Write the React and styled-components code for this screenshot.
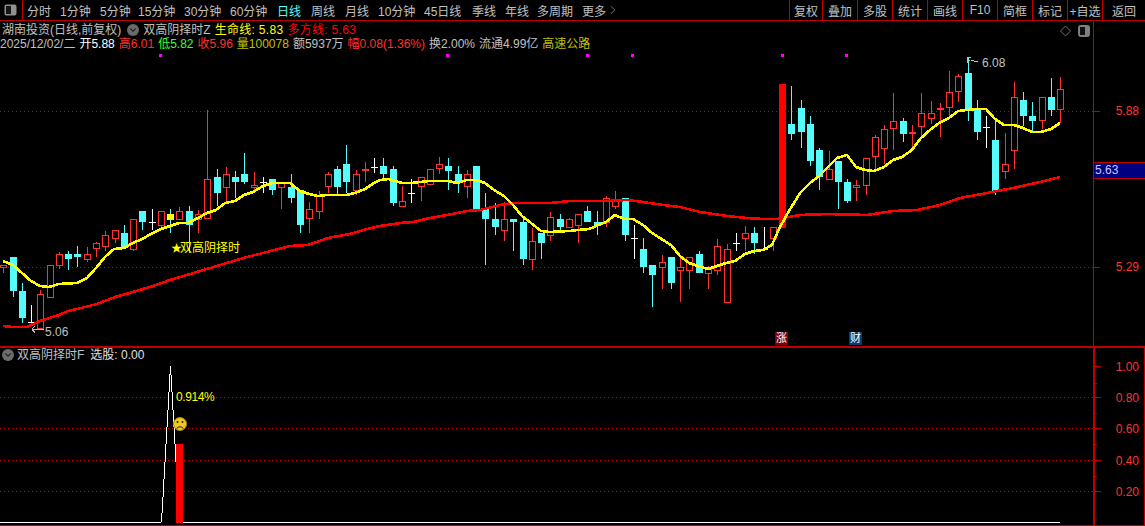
import React from "react";
import styled, { createGlobalStyle } from "styled-components";
import { ChevronDown, ChevronRight } from "lucide-react";

const UP = "#ff3232";
const CYAN = "#54fcfc";
const GREY = "#c0c0c0";
const OLIVE = "#c0c000";
const LINE = "#c00000";

const GlobalStyle = createGlobalStyle`
  html, body {
    margin: 0;
    background: #000;
  }
  body {
    font-family: "Liberation Sans", "Noto Sans CJK SC", sans-serif;
    font-size: 12px;
    color: ${GREY};
  }
`;

const Page = styled.div`
  width: 1145px;
  height: 526px;
  overflow: hidden;
  display: flex;
  flex-direction: column;
  background: #000;
`;

const Toolbar = styled.div`
  height: 20px;
  flex: none;
  display: flex;
  align-items: center;
  border-bottom: 1px solid ${LINE};
`;

const PanelToggle = styled.div`
  width: 23px;
  height: 20px;
  flex: none;
  display: flex;
  align-items: center;
  box-sizing: border-box;
  padding-left: 4px;
  border-right: 1px solid ${LINE};
`;

const Periods = styled.div`
  display: flex;
  align-items: center;
  flex: 1;
  padding-left: 4px;
`;

const Period = styled.span`
  width: ${(p) => (p.$w ? `${p.$w}px` : "auto")};
  flex: none;
  color: ${(p) => (p.$active ? CYAN : GREY)};
  white-space: nowrap;
  display: flex;
  align-items: center;
`;

const ToolGroup = styled.div`
  display: flex;
  height: 20px;
`;

const ToolButton = styled.div`
  width: ${(p) => p.$w || 35}px;
  box-sizing: border-box;
  border-left: 1px solid ${LINE};
  display: flex;
  align-items: center;
  justify-content: center;
  white-space: nowrap;
`;

const Body = styled.div`
  flex: 1;
  display: flex;
  flex-direction: column;
  min-height: 0;
`;

const Pane = styled.div`
  display: flex;
  height: ${(p) => p.$h}px;
  flex: none;
`;

const SubPane = styled(Pane)`
  border-top: 2px solid ${LINE};
  border-bottom: 1px solid ${LINE};
`;

const ChartArea = styled.div`
  position: relative;
  width: 1093px;
  flex: none;
`;

const Drawing = styled.svg`
  display: block;
  position: absolute;
  left: 0;
  top: 0;
`;

const Axis = styled.div`
  position: relative;
  flex: 1;
  border-left: ${(p) => (p.$heavy ? 2 : 1)}px solid ${LINE};
  border-right: ${(p) => (p.$heavy ? 1 : 0)}px solid ${LINE};
`;

const AxisLabel = styled.span`
  position: absolute;
  right: ${(p) => (p.$heavy ? 5 : 6)}px;
  top: ${(p) => p.$top}px;
  color: ${UP};
  line-height: 14px;
`;

const AxisTick = styled.i`
  position: absolute;
  left: 0;
  top: ${(p) => p.$top}px;
  width: ${(p) => p.$w}px;
  height: 1px;
  background: ${LINE};
`;

const PriceTag = styled.div`
  position: absolute;
  left: 0;
  right: 0;
  top: ${(p) => p.$top}px;
  height: 15px;
  border-top: 1px solid ${LINE};
  border-bottom: 1px solid ${LINE};
  background: #000080;
  color: #c8c8ff;
  line-height: 15px;
  padding-left: 1px;
`;

const Legend = styled.div`
  position: absolute;
  left: ${(p) => p.$x || 0}px;
  top: ${(p) => p.$y}px;
  display: flex;
  align-items: center;
  gap: ${(p) => p.$gap || 0}px;
  white-space: nowrap;
  line-height: 14px;
`;

const Txt = styled.span`
  color: ${(p) => p.$c || GREY};
  letter-spacing: ${(p) => p.$ls || 0}px;
  margin-left: ${(p) => p.$ml || 0}px;
`;

const RoundButton = styled.span`
  width: 12px;
  height: 12px;
  margin-left: ${(p) => p.$ml || 0}px;
  border-radius: 50%;
  background: #6a6a6a;
  display: inline-flex;
  align-items: center;
  justify-content: center;
  color: #101010;
`;

const Note = styled.span`
  position: absolute;
  left: ${(p) => p.$x}px;
  top: ${(p) => p.$y}px;
  color: ${(p) => p.$c || GREY};
  line-height: 14px;
  white-space: nowrap;
  letter-spacing: ${(p) => p.$ls || 0}px;
`;

const Star = styled.span`
  font-size: 11px;
  margin-right: -2px;
`;

const Badge = styled.span`
  position: absolute;
  left: ${(p) => p.$x}px;
  top: 311px;
  width: 13px;
  height: 13px;
  background: ${(p) => p.$bg};
  color: #fff;
  font-size: 11px;
  line-height: 13px;
  text-align: center;
`;

const periods = [
  ["分时", 33], ["1分钟", 40], ["5分钟", 38], ["15分钟", 46], ["30分钟", 46], ["60分钟", 47], ["日线", 34],
  ["周线", 34], ["月线", 33], ["10分钟", 46], ["45日线", 48], ["季线", 33], ["年线", 32], ["多周期", 45],
];
const tools = [["复权", 33], ["叠加"], ["多股"], ["统计"], ["画线"], ["F10"], ["简框"], ["标记"], ["+自选"], ["返回", 43]];

// type, wick top, body top, body bottom, wick bottom (screen y)
const candles = [
  ["r",265,265,268,273],["c",257,257,291,297],["c",283,291,318,323],["w",305,322,322,325],["r",290,294,329,329],
  ["r",265,265,298,298],["r",252,254,266,269],["c",251,254,259,270],["c",246,254,257,267],["r",247,254,260,262],
  ["r",242,243,249,257],["r",231,235,247,251],["r",230,230,239,243],["c",225,233,248,248],["r",219,219,250,251],
  ["c",211,211,222,230],["w",209,222,222,230],["r",211,211,226,227],["y",209,214,220,233],["r",207,211,220,220],
  ["c",206,211,225,253],["r",210,214,220,233],["r",110,179,219,219],["c",169,177,193,206],["r",167,174,188,202],
  ["c",171,177,182,198],["c",153,174,182,184],["r",172,185,188,190],["w",177,182,182,193],["c",179,179,190,195],
  ["r",182,182,188,209],["c",174,187,198,203],["c",190,190,225,233],["r",202,209,219,233],["r",191,196,212,219],
  ["r",172,174,187,193],["c",166,169,187,195],["c",145,164,182,193],["r",170,174,191,195],["r",162,169,171,182],
  ["w",158,167,167,173],["c",158,166,174,179],["c",166,169,203,206],["r",186,201,207,207],["w",179,193,193,203],
  ["r",177,177,187,201],["r",169,169,185,185],["r",157,164,169,174],["c",158,166,171,190],["c",166,174,183,193],
  ["r",170,174,187,198],["c",166,166,209,209],["c",193,209,219,265],["c",203,219,227,235],["r",202,219,231,241],
  ["c",219,219,222,251],["c",219,222,259,265],["r",228,241,260,270],["c",233,233,243,259],["r",212,217,236,241],
  ["c",214,219,227,232],["r",218,219,228,228],["r",214,214,226,243],["c",206,211,222,222],["c",211,222,225,235],
  ["r",196,198,223,227],["r",191,201,207,209],["c",198,198,235,241],["w",225,238,238,259],["c",238,249,267,273],
  ["c",265,265,275,307],["r",255,262,268,289],["c",257,257,283,289],["r",256,267,271,302],["r",257,257,271,289],
  ["c",251,254,273,273],["r",266,268,274,289],["r",239,246,271,275],["r",244,249,303,303],["w",233,243,243,251],
  ["r",226,233,239,251],["c",227,233,243,254],["w",227,249,249,250],["r",227,227,239,251],["R",84,84,228,228],
  ["c",86,124,134,140],["c",100,108,132,148],["c",116,124,161,166],["c",148,150,177,190],["r",151,169,180,180],
  ["c",161,161,182,209],["c",179,182,201,203],["r",180,185,188,201],["r",158,158,186,195],["r",135,137,157,170],
  ["r",125,129,149,164],["r",93,121,129,150],["c",118,121,134,142],["r",125,132,134,150],["r",93,113,127,138],
  ["r",101,113,119,124],["r",103,108,110,137],["r",71,92,108,117],["r",74,76,92,102],["c",57,73,110,121],
  ["c",100,110,132,140],["w",116,127,127,148],["c",120,140,191,195],["r",133,164,172,179],["r",82,97,151,169],
  ["c",92,100,116,126],["c",102,116,121,132],["r",97,97,121,129],["c",78,97,110,116],["r",77,89,110,123],
];

const yellowLine = "3,261 13,265 22,273 31,281 40,286 49,287 59,284 77,283 87,278 96,268 105,257 114,249 124,248 133,243 142,239 151,234 161,229 179,223 188,223 198,218 207,213 216,210 225,203 235,201 244,195 253,192 263,186 272,183 290,183 300,191 309,194 318,196 327,195 346,195 355,193 365,189 374,183 380,180 389,179 402,183 411,183 429,181 448,181 457,183 467,180 476,180 485,183 494,190 504,196 513,205 522,216 531,223 541,231 550,232 569,231 578,230 589,229 606,222 615,215 624,219 633,219 643,225 652,233 671,245 680,256 689,263 698,266 708,269 717,266 726,263 735,261 745,254 754,251 763,250 772,245 779,229 786,216 800,193 810,183 819,176 828,167 837,158 847,155 856,167 865,170 874,171 884,167 893,160 902,157 912,150 921,138 930,130 939,123 949,118 958,111 967,110 976,109 986,109 995,119 1004,125 1014,125 1023,128 1032,132 1041,132 1051,129 1060,123";
const redLine = "3,326 13,327 27,327 40,321 59,315 68,311 77,309 97,304 115,297 133,292 153,286 170,280 187,275 207,269 227,263 247,257 267,252 290,246 308,245 328,238 350,234 367,229 380,226 400,223 413,222 430,218 447,215 467,211 480,210 500,205 513,203 550,203 570,201 607,201 627,200 643,202 663,205 680,207 700,212 727,216 747,218 763,219 777,219 800,215 827,214 867,215 893,211 917,210 940,205 960,198 987,193 1013,188 1040,182 1060,177";
const peak = "0,522 161,522 162,513 163,497 164,479 165,462 166,444 167,427 168,410 169,392 170,374 170,366 171,375 172,392 173,410 174,427 175,444 175,462";

const candleX = (i) => Math.round(3.3 + i * 9.272);

const Candle = ({ data, i }) => {
  const [type, wickTop, top, bottom, wickBottom] = data;
  const x = candleX(i);
  if (type === "w") {
    return (
      <g stroke="#fff" shapeRendering="crispEdges">
        <line x1={x + 0.5} x2={x + 0.5} y1={wickTop} y2={wickBottom} />
        <line x1={x - 3} x2={x + 4} y1={top + 0.5} y2={top + 0.5} />
      </g>
    );
  }
  if (type === "R") {
    return <rect x={x - 3} y={top} width={7} height={bottom - top} fill="#ff0000" shapeRendering="crispEdges" />;
  }
  const hollow = type === "r";
  const color = hollow ? UP : CYAN;
  return (
    <g shapeRendering="crispEdges">
      <line x1={x + 0.5} x2={x + 0.5} y1={wickTop} y2={wickBottom} stroke={color} />
      {hollow ? (
        <rect x={x - 2.5} y={top + 0.5} width={6} height={Math.max(bottom - top - 1, 1)} fill="#000" stroke={color} />
      ) : (
        <rect x={x - 3} y={top} width={7} height={bottom - top} fill={type === "y" ? "#ffff00" : CYAN} />
      )}
    </g>
  );
};

const Dotted = ({ y, w = 1093 }) => (
  <line x1="0" x2={w} y1={y + 0.5} y2={y + 0.5} stroke="#d00000" strokeDasharray="1 3" shapeRendering="crispEdges" />
);

const MainChart = () => (
  <Drawing width="1093" height="325" viewBox="0 21 1093 325">
    <Dotted y={111} />
    <Dotted y={267} />
    {[160, 447, 587, 632, 782, 846].map((x) => (
      <rect key={x} x={x - 1} y={54} width={3} height={3} fill="#ff00ff" />
    ))}
    {candles.map((c, i) => <Candle key={i} data={c} i={i} />)}
    <polyline points={redLine} fill="none" stroke="#ff0000" strokeWidth="2.6" shapeRendering="crispEdges" />
    <polyline points={yellowLine} fill="none" stroke="#ffff00" strokeWidth="2.6" shapeRendering="crispEdges" />
    {/* high and low markers */}
    <path d="M967.5 57v6M968 57.5h3M968 60.5h2M971 60l3 1 4 1" fill="none" stroke={GREY} shapeRendering="crispEdges" />
    <path d="M32 329l3-3M32 329l3 4M32 329h12" fill="none" stroke={GREY} shapeRendering="crispEdges" />
    {/* chart corner marks */}
    <path d="M1065.5 26l5 5-5 5-5-5z" fill="none" stroke="#707070" />
    <rect x="1078.5" y="25.5" width="11" height="11" rx="2" fill="#808080" stroke="#808080" />
    <rect x="1080" y="27" width="5" height="8" fill="#111" />
  </Drawing>
);

const SubChart = () => (
  <Drawing width="1093" height="177" viewBox="0 348 1093 177">
    {[397, 428, 460, 491].map((y) => <Dotted key={y} y={y} />)}
    <polyline points={peak} fill="none" stroke="#fff" shapeRendering="crispEdges" />
    <line x1="183" x2="1060" y1="522.5" y2="522.5" stroke="#fff" shapeRendering="crispEdges" />
    <rect x="176" y="444" width="7" height="79" fill="#ff0000" />
    {/* sad face */}
    <circle cx="180" cy="424" r="6.5" fill="#f0c820" stroke="#a88810" />
    <circle cx="177.5" cy="422" r="1" fill="#222" />
    <circle cx="182.5" cy="422" r="1" fill="#222" />
    <path d="M176.5 428.5q3.5-3.5 7 0" fill="none" stroke="#222" />
  </Drawing>
);

const App = () => (
  <Page>
    <GlobalStyle />
    <Toolbar>
      <PanelToggle>
        <svg width="13" height="12" viewBox="0 0 13 12">
          <rect x="0.5" y="0.5" width="12" height="11" rx="2" fill="#909090" />
          <rect x="2" y="2" width="5" height="8" fill="#151515" />
        </svg>
      </PanelToggle>
      <Periods>
        {periods.map(([p, w]) => <Period key={p} $w={w} $active={p === "日线"}>{p}</Period>)}
        <Period>更多<ChevronRight size={14} strokeWidth={1} /></Period>
      </Periods>
      <ToolGroup>
        {tools.map(([t, w]) => <ToolButton key={t} $w={w}>{t}</ToolButton>)}
      </ToolGroup>
    </Toolbar>
    <Body>
      <Pane $h={325}>
        <ChartArea>
          <MainChart />
          <Legend $x={2} $y={2} $gap={4}>
            <Txt>湖南投资(日线,前复权)</Txt>
            <RoundButton $ml={2}><ChevronDown size={10} strokeWidth={2.5} /></RoundButton>
            <Txt>双高阴择时Z</Txt>
            <Txt $c="#ffff00" $ls={0.3}>生命线: 5.83</Txt>
            <Txt $c="#ff0000" $ls={0.3}>多方线: 5.63</Txt>
          </Legend>
          <Legend $y={16} $gap={4}>
            <Txt>2025/12/02/二</Txt>
            <Txt $c="#fff">开5.88</Txt>
            <Txt $c={UP}>高6.01</Txt>
            <Txt $c="#33ff33">低5.82</Txt>
            <Txt $c={UP}>收5.96</Txt>
            <Txt $c={OLIVE}>量100078</Txt>
            <Txt>额5937万</Txt>
            <Txt $c={UP}>幅0.08(1.36%)</Txt>
            <Txt>换2.00%</Txt>
            <Txt>流通4.99亿</Txt>
            <Txt $c={OLIVE}>高速公路</Txt>
          </Legend>
          <Note $x={982} $y={35}>6.08</Note>
          <Note $x={45} $y={304}>5.06</Note>
          <Note $x={171} $y={220} $c="#ffff00"><Star>★</Star>双高阴择时</Note>
          <Badge $x={775} $bg="#800000">涨</Badge>
          <Badge $x={849} $bg="#0a3c6e">财</Badge>
        </ChartArea>
        <Axis>
          <AxisTick $top={90} $w={6} />
          <AxisLabel $top={83}>5.88</AxisLabel>
          <AxisTick $top={246} $w={6} />
          <AxisLabel $top={239}>5.29</AxisLabel>
          <PriceTag $top={141}>5.63</PriceTag>
        </Axis>
      </Pane>
      <SubPane $h={177}>
        <ChartArea>
          <SubChart />
          <Legend $x={2} $y={0} $gap={3}>
            <RoundButton><ChevronDown size={10} strokeWidth={2.5} /></RoundButton>
            <Txt>双高阴择时F</Txt>
            <Txt $c="#e0e0e0" $ml={3}>选股: 0.00</Txt>
          </Legend>
          <Note $x={176} $y={42} $c="#ffff00" $ls={-0.4}>0.914%</Note>
        </ChartArea>
        <Axis $heavy>
          {[18, 49, 80, 112, 143].map((t) => <AxisTick key={t} $top={t} $w={6} />)}
          {[35, 65, 96, 128].map((t) => <AxisTick key={t} $top={t} $w={2} />)}
          {[["1.00", 12], ["0.80", 43], ["0.60", 74], ["0.40", 106], ["0.20", 137]].map(([v, t]) => (
            <AxisLabel key={v} $heavy $top={t}>{v}</AxisLabel>
          ))}
        </Axis>
      </SubPane>
    </Body>
  </Page>
);

export default App;
